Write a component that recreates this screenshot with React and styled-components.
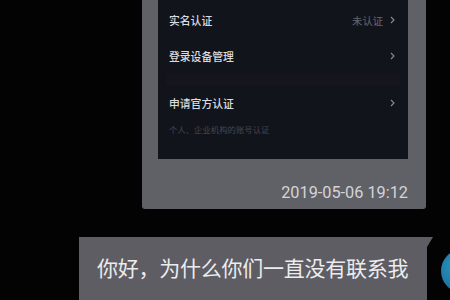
import React from "react";
import styled, { createGlobalStyle } from "styled-components";

const GlobalStyle = createGlobalStyle`
  html, body {
    margin: 0;
    padding: 0;
    background: #030304;
  }
  body {
    font-family: "Noto Sans CJK SC", "Noto Sans", sans-serif;
  }
`;

const Page = styled.div`
  width: 450px;
  height: 300px;
  overflow: hidden;
  display: flex;
  flex-direction: column;
  background: #030304;
`;

const ImageBubble = styled.div`
  margin-left: 142px;
  width: 284px;
  background: #606067;
  border-radius: 0 0 3px 3px;
  padding: 0 18px 0 16px;
  box-sizing: border-box;
`;

const Panel = styled.div`
  height: 159px;
  background: #12141c;
  padding-top: 2px;
  box-sizing: border-box;
  display: flex;
  flex-direction: column;
`;

const Row = styled.div`
  height: ${(p) => p.$h || 36}px;
  display: flex;
  align-items: center;
  justify-content: space-between;
  padding: 0 13px 0 11px;
  box-sizing: border-box;
`;

const Label = styled.span`
  font-size: 10.8px;
  font-weight: 500;
  color: #dcdcdf;
`;

const Right = styled.span`
  display: flex;
  align-items: center;
  gap: 7px;
`;

const Status = styled.span`
  font-size: 10.3px;
  color: #66676d;
`;

const Band = styled.div`
  height: 11px;
  background: #15161d;
  margin: 0 8px;
`;

const Hint = styled.div`
  height: 16px;
  display: flex;
  align-items: center;
  padding-left: 11px;
  font-size: 8.4px;
  color: #45464d;
`;

const TimeRow = styled.div`
  height: 50px;
  display: flex;
  align-items: center;
  justify-content: flex-end;
  padding-top: 16px;
  box-sizing: border-box;
  font-family: Roboto, "Liberation Sans", sans-serif;
  font-size: 16.3px;
  color: #d4d4d8;
`;

const ChatRow = styled.div`
  margin-top: 28px;
  display: flex;
  align-items: flex-start;
`;

const TextBubble = styled.div`
  position: relative;
  flex-shrink: 0;
  margin-left: 79px;
  width: 348px;
  height: 80px;
  background: #5e5d64;
  box-sizing: border-box;
  padding: 17px 0 0 18px;
  font-size: 21px;
  line-height: 26px;
  letter-spacing: -0.25px;
  white-space: nowrap;
  color: #ececee;
  &::after {
    content: "";
    position: absolute;
    right: -6px;
    top: 0;
    border-top: 10px solid #5e5d64;
    border-right: 6px solid transparent;
  }
`;

const Avatar = styled.div`
  margin-left: 14px;
  margin-top: 12px;
  width: 44px;
  height: 44px;
  flex-shrink: 0;
  border-radius: 50%;
  background: radial-gradient(circle at 40% 40%, #2a9bc8, #1a6f9a 70%);
`;

function Chevron() {
  return (
    <svg width="5" height="8" viewBox="0 0 5 8">
      <path d="M1 1 L4 4 L1 7" fill="none" stroke="#8b8c92" strokeWidth="1.1" />
    </svg>
  );
}

export default function App() {
  return (
    <Page>
      <GlobalStyle />
      <ImageBubble>
        <Panel>
          <Row>
            <Label>实名认证</Label>
            <Right>
              <Status>未认证</Status>
              <Chevron />
            </Right>
          </Row>
          <Row>
            <Label>登录设备管理</Label>
            <Chevron />
          </Row>
          <Band />
          <Row $h={36}>
            <Label>申请官方认证</Label>
            <Chevron />
          </Row>
          <Hint>个人、企业机构的账号认证</Hint>
        </Panel>
        <TimeRow>2019-05-06 19:12</TimeRow>
      </ImageBubble>
      <ChatRow>
        <TextBubble>你好，为什么你们一直没有联系我</TextBubble>
        <Avatar />
      </ChatRow>
    </Page>
  );
}
